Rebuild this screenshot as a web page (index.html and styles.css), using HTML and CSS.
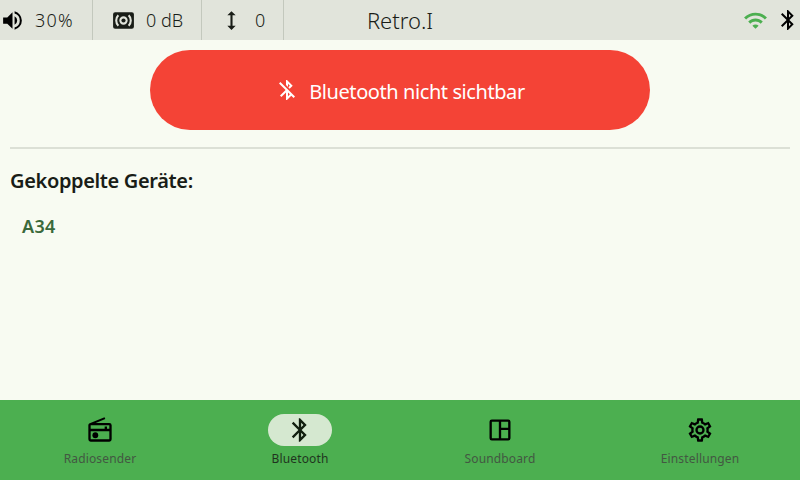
FILE: index.html
```html
<!DOCTYPE html>
<html lang="de">
<head>
<meta charset="utf-8">
<title>Retro.I</title>
<link rel="stylesheet" href="styles.css">
</head>
<body>
<header class="status">
  <div class="status-left">
    <div class="stat volume"><svg class="icon" viewBox="0 0 24 24"><path d="M3 9v6h4l5 5V4L7 9H3zm13.500 3A4.500 4.500 0 0 0 14 7.970v8.050A4.500 4.500 0 0 0 16.500 12zM14 3.230v2.060A7 7 0 0 1 14 18.710v2.060A9 9 0 0 0 14 3.230z"/></svg><span>30%</span></div>
    <div class="stat bass"><svg class="icon" viewBox="0 0 24 24"><path fill-rule="evenodd" d="M20 4H4a2 2 0 0 0-2 2v12a2 2 0 0 0 2 2h16a2 2 0 0 0 2-2V6a2 2 0 0 0-2-2zM7.760 16.240l-1.410 1.410A8 8 0 0 1 4 12a8 8 0 0 1 2.340-5.660l1.410 1.410A6 6 0 0 0 6 12a6 6 0 0 0 1.760 4.240zM12 16a4 4 0 1 1 0-8 4 4 0 0 1 0 8zm5.660 1.660-1.410-1.410A6 6 0 0 0 18 12a6 6 0 0 0-1.760-4.240l1.410-1.410A8 8 0 0 1 20 12a8 8 0 0 1-2.340 5.660z"/><circle cx="12" cy="12" r="2"/></svg><span>0 dB</span></div>
    <div class="stat treble"><svg class="icon" viewBox="0 0 24 24"><path d="M13 6.990h3L12 3 8 6.990h3v10.020H8L12 21l4-3.990h-3z"/></svg><span>0</span></div>
  </div>
  <h1 class="title">Retro.I</h1>
  <div class="status-right">
    <svg class="icon wifi" viewBox="0 0 24 24"><path d="M1 9l2 2c4.970-4.970 13.030-4.970 18 0l2-2C16.930 2.930 7.080 2.930 1 9zm8 8l3 3 3-3c-1.650-1.660-4.340-1.660-6 0zm-4-4l2 2c2.760-2.760 7.240-2.760 10 0l2-2C15.140 9.140 8.870 9.140 5 13z"/></svg>
    <svg class="icon bt" viewBox="0 0 24 24"><path d="M17.710 7.710 12 2h-1v7.590L6.410 5 5 6.410 10.590 12 5 17.590 6.410 19 11 14.410V22h1l5.710-5.710-4.300-4.290 4.300-4.290zM13 5.830l1.880 1.880L13 9.590V5.830zm1.880 10.460L13 18.170v-3.760l1.880 1.880z"/></svg>
  </div>
</header>
<main class="content">
  <button class="visibility"><svg class="icon" viewBox="0 0 24 24"><path d="M13 5.830l1.880 1.880-1.600 1.600 1.410 1.410 3.020-3.020L12 2h-1v5.030l2 2v-3.200zM5.410 4 4 5.410 10.590 12 5 17.590 6.410 19 11 14.410V22h1l4.290-4.290 2.300 2.290L20 18.590 5.410 4zM13 18.170v-3.760l1.880 1.880L13 18.170z"/></svg><span>Bluetooth nicht sichtbar</span></button>
  <hr class="divider">
  <h2 class="heading">Gekoppelte Geräte:</h2>
  <div class="device"><span>A34</span></div>
</main>
<nav class="nav">
  <div class="tab"><div class="pill"><svg class="icon" viewBox="0 0 24 24"><path fill-rule="evenodd" d="M3.240 6.150C2.510 6.430 2 7.170 2 8v12a2 2 0 0 0 2 2h16a2 2 0 0 0 2-2V8a2 2 0 0 0-2-2H8.300l8.260-3.340L15.880 1 3.240 6.150zM4 8h16v3h-2V9h-2v2H4V8zm0 5h16v7H4v-7z"/><circle cx="8" cy="16.500" r="2.500"/></svg></div><span class="label">Radiosender</span></div>
  <div class="tab active"><div class="pill"><svg class="icon" viewBox="0 0 24 24"><path d="M17.710 7.710 12 2h-1v7.590L6.410 5 5 6.410 10.590 12 5 17.590 6.410 19 11 14.410V22h1l5.710-5.710-4.300-4.290 4.300-4.290zM13 5.830l1.880 1.880L13 9.590V5.830zm1.880 10.460L13 18.170v-3.760l1.880 1.880z"/></svg></div><span class="label">Bluetooth</span></div>
  <div class="tab"><div class="pill"><svg class="icon" viewBox="0 0 24 24"><path fill-rule="evenodd" d="M19 3H5a2 2 0 0 0-2 2v14a2 2 0 0 0 2 2h14a2 2 0 0 0 2-2V5a2 2 0 0 0-2-2zM5 19V5h6v14H5zm14 0h-6v-7h6v7zm0-9h-6V5h6v5z"/></svg></div><span class="label">Soundboard</span></div>
  <div class="tab"><div class="pill"><svg class="icon" viewBox="0 0 24 24"><path d="M19.430 12.980c.04-.32.07-.64.07-.98s-.03-.66-.07-.98l2.110-1.650c.19-.15.24-.42.12-.64l-2-3.460c-.09-.16-.26-.25-.44-.25-.06 0-.12.010-.17.030l-2.490 1c-.52-.4-1.080-.73-1.690-.98l-.38-2.650C14.460 2.180 14.250 2 14 2h-4c-.25 0-.46.18-.49.42l-.38 2.650c-.61.25-1.170.59-1.690.98l-2.490-1c-.06-.02-.12-.03-.18-.03-.17 0-.34.09-.43.25l-2 3.460c-.13.22-.07.49.12.64l2.110 1.650c-.04.32-.07.65-.07.98s.03.66.07.98l-2.110 1.650c-.19.15-.24.42-.12.64l2 3.460c.09.16.26.25.44.25.06 0 .12-.01.17-.03l2.490-1c.52.4 1.080.73 1.690.98l.38 2.650c.03.24.24.42.49.42h4c.25 0 .46-.18.49-.42l.38-2.650c.61-.25 1.170-.59 1.690-.98l2.490 1c.06.02.12.03.18.03.17 0 .34-.09.43-.25l2-3.460c.12-.22.07-.49-.12-.64l-2.110-1.650zm-1.980-1.710c.04.31.05.52.05.73s-.02.43-.05.73l-.14 1.130.89.7 1.080.84-.7 1.210-1.270-.51-1.040-.42-.9.68c-.43.32-.84.56-1.250.73l-1.060.43-.16 1.130-.2 1.350h-1.400l-.35-2.480-1.060-.43c-.43-.18-.83-.41-1.230-.71l-.91-.7-1.060.43-1.270.51-.7-1.210 1.080-.84.89-.7-.14-1.130c-.03-.31-.05-.54-.05-.74s.02-.43.05-.73l.14-1.130-.89-.7-1.080-.84.7-1.210 1.270.51 1.040.42.9-.68c.43-.32.84-.56 1.250-.73l1.060-.43.16-1.130.2-1.350h1.390l.35 2.480 1.060.43c.43.18.83.41 1.230.71l.91.7 1.060-.43 1.270-.51.7 1.210-1.070.85-.89.7.14 1.130zM12 8a4 4 0 1 0 0 8 4 4 0 0 0 0-8zm0 6a2 2 0 1 1 0-4 2 2 0 0 1 0 4z"/></svg></div><span class="label">Einstellungen</span></div>
</nav>
</body>
</html>
```
FILE: styles.css
```css
* { box-sizing: border-box; }
body {
  margin: 0;
  width: 800px;
  height: 480px;
  display: flex;
  flex-direction: column;
  overflow: hidden;
  background: #f8fbf2;
  color: #191d17;
  font-family: "Noto Sans", sans-serif;
}
.icon { width: 24px; height: 24px; flex: none; fill: currentColor; }
.status {
  height: 40px;
  display: grid;
  grid-template-columns: 1fr auto 1fr;
  align-items: center;
  background: #e1e4db;
}
.status-left { display: flex; height: 40px; }
.stat {
  display: flex;
  align-items: center;
  border-right: 1px solid #c3c8bd;
  font-size: 18px;
  font-weight: 300;
  white-space: nowrap;
}
.stat .icon { width: 25px; height: 25px; }
.volume { width: 93px; gap: 10px; letter-spacing: 1.2px; }
.volume .icon { color: #000; }
.bass { width: 109px; padding-left: 18px; gap: 10px; }
.treble { width: 82px; padding-left: 17px; gap: 11px; }
.title { margin: 0; font-size: 22px; font-weight: 300; line-height: 40px; }
.status-right { display: flex; align-items: center; justify-content: flex-end; gap: 8px; }
.status-right .wifi { width: 25px; height: 25px; color: #4caf50; }
.bt { color: #000; }
.content { flex: 1; padding: 10px; }
.visibility {
  display: flex;
  align-items: center;
  justify-content: center;
  gap: 10px;
  width: 500px;
  height: 80px;
  margin: 0 auto;
  padding: 0;
  border: 0;
  border-radius: 40px;
  background: #f44336;
  color: #fff;
  font: 400 20px "Noto Sans", sans-serif;
  letter-spacing: -0.42px;
}
.visibility span { position: relative; top: 1px; }
.divider { height: 2px; margin: 17px 0; border: 0; background: #dce0d6; }
.heading { margin: 0; font-size: 20px; font-weight: 600; line-height: 30px; letter-spacing: -0.36px; }
.device {
  margin-top: 15px;
  padding-left: 12px;
  color: #3a693b;
  font-size: 18px;
  font-weight: 600;
  line-height: 30px;
  letter-spacing: 0.3px;
}
.nav {
  height: 80px;
  display: grid;
  grid-template-columns: repeat(4, 1fr);
  background: #4caf50;
}
.tab { display: flex; flex-direction: column; align-items: center; padding-top: 14px; }
.tab .icon { width: 28px; height: 28px; color: #000; }
.pill {
  width: 64px;
  height: 32px;
  display: flex;
  align-items: center;
  justify-content: center;
  border-radius: 16px;
}
.active .pill { background: #d5e8d0; }
.tab.active .icon { color: #111f0f; }
.label {
  margin-top: 5px;
  font-size: 12px;
  line-height: 16px;
  letter-spacing: 0.15px;
  color: #424940;
  opacity: 0.85;
}
.active .label { color: #191d17; }
```
